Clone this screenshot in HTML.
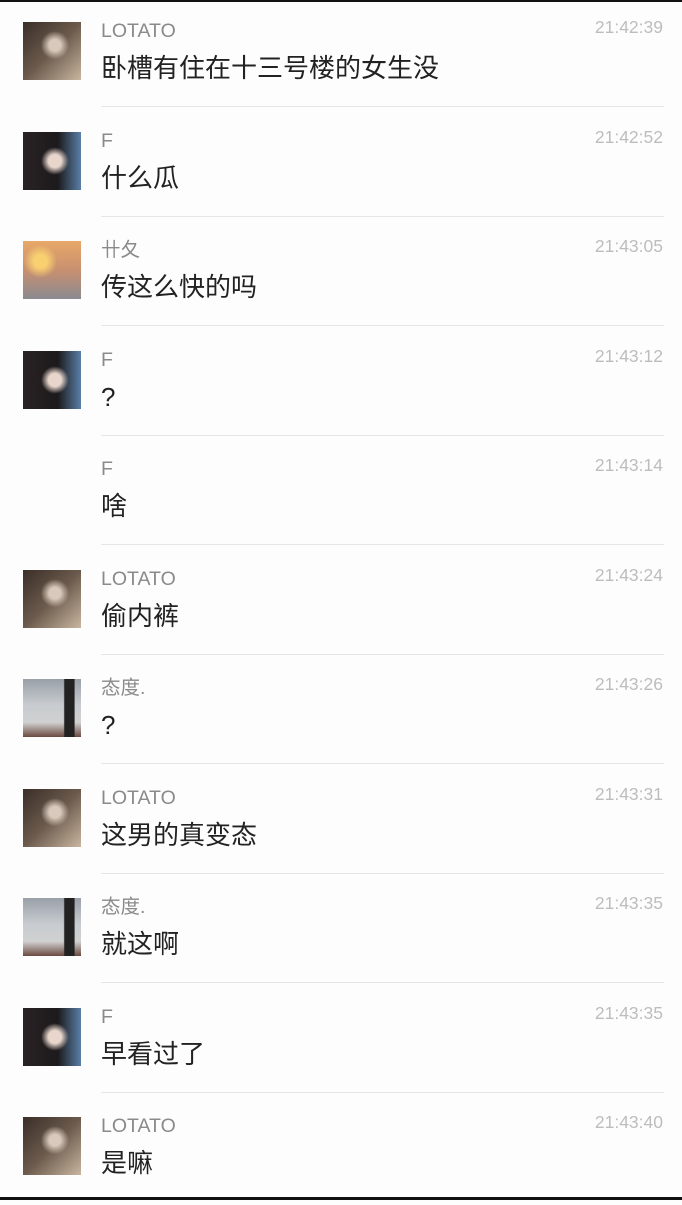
<!DOCTYPE html>
<html><head><meta charset="utf-8"><style>
body{margin:0;width:682px;height:1200px;background:#fdfdfd;position:relative;overflow:hidden;font-family:"Liberation Sans","Noto Sans CJK SC",sans-serif}
.top{position:absolute;left:0;top:0;width:682px;height:2px;background:#111}
.bot{position:absolute;left:0;top:1197px;width:682px;height:3px;background:#111}
.r{position:absolute;left:0;width:682px;height:110px}
.av{position:absolute;left:23px;top:22px;width:58px;height:58px}
.n{position:absolute;left:101px;top:21px;font-size:19.5px;line-height:20px;height:20px;color:#8a8a8a;white-space:nowrap}
.m{position:absolute;left:101px;top:55px;font-size:26px;line-height:26px;height:26px;color:#222;white-space:nowrap}
.t{position:absolute;right:19px;top:18px;font-size:17.5px;line-height:18px;color:#bdbdbd}
.d{position:absolute;left:101px;top:106px;width:563px;height:1px;background:#e6e6e6}
.L{background:radial-gradient(circle at 55% 40%,#d8c9bc 0 12%,transparent 30%),linear-gradient(135deg,#3a2e28,#6b5a4c 50%,#c8b6a0)}
.F{background:radial-gradient(circle at 55% 50%,#e8d6cc 0 15%,transparent 32%),linear-gradient(90deg,#2a2224,#1c1a1c 60%,#5a7fa8)}
.S{background:radial-gradient(circle at 30% 35%,#f8d070 0 12%,transparent 30%),linear-gradient(180deg,#e8a868,#c89070 50%,#8a8a90)}
.T{background:linear-gradient(90deg,transparent 70%,#222 72% 88%,transparent 90%),linear-gradient(180deg,#9aa0a8,#c8ccd0 45%,#d0d0d0 75%,#6a4a40)}
</style></head><body>
<div class="top"></div>
<div class="r" style="top:0"><div class="av L"></div><div class="n">LOTATO</div><div class="m">卧槽有住在十三号楼的女生没</div><div class="t">21:42:39</div><div class="d"></div></div>
<div class="r" style="top:109.5px"><div class="av F"></div><div class="n">F</div><div class="m">什么瓜</div><div class="t">21:42:52</div><div class="d"></div></div>
<div class="r" style="top:219px"><div class="av S"></div><div class="n">卄夂</div><div class="m">传这么快的吗</div><div class="t">21:43:05</div><div class="d"></div></div>
<div class="r" style="top:328.5px"><div class="av F"></div><div class="n">F</div><div class="m">?</div><div class="t">21:43:12</div><div class="d"></div></div>
<div class="r" style="top:438px"><div class="n">F</div><div class="m">啥</div><div class="t">21:43:14</div><div class="d"></div></div>
<div class="r" style="top:547.5px"><div class="av L"></div><div class="n">LOTATO</div><div class="m">偷内裤</div><div class="t">21:43:24</div><div class="d"></div></div>
<div class="r" style="top:657px"><div class="av T"></div><div class="n">态度.</div><div class="m">?</div><div class="t">21:43:26</div><div class="d"></div></div>
<div class="r" style="top:766.5px"><div class="av L"></div><div class="n">LOTATO</div><div class="m">这男的真变态</div><div class="t">21:43:31</div><div class="d"></div></div>
<div class="r" style="top:876px"><div class="av T"></div><div class="n">态度.</div><div class="m">就这啊</div><div class="t">21:43:35</div><div class="d"></div></div>
<div class="r" style="top:985.5px"><div class="av F"></div><div class="n">F</div><div class="m">早看过了</div><div class="t">21:43:35</div><div class="d"></div></div>
<div class="r" style="top:1095px"><div class="av L"></div><div class="n">LOTATO</div><div class="m">是嘛</div><div class="t">21:43:40</div></div>
<div class="bot"></div>
</body></html>
